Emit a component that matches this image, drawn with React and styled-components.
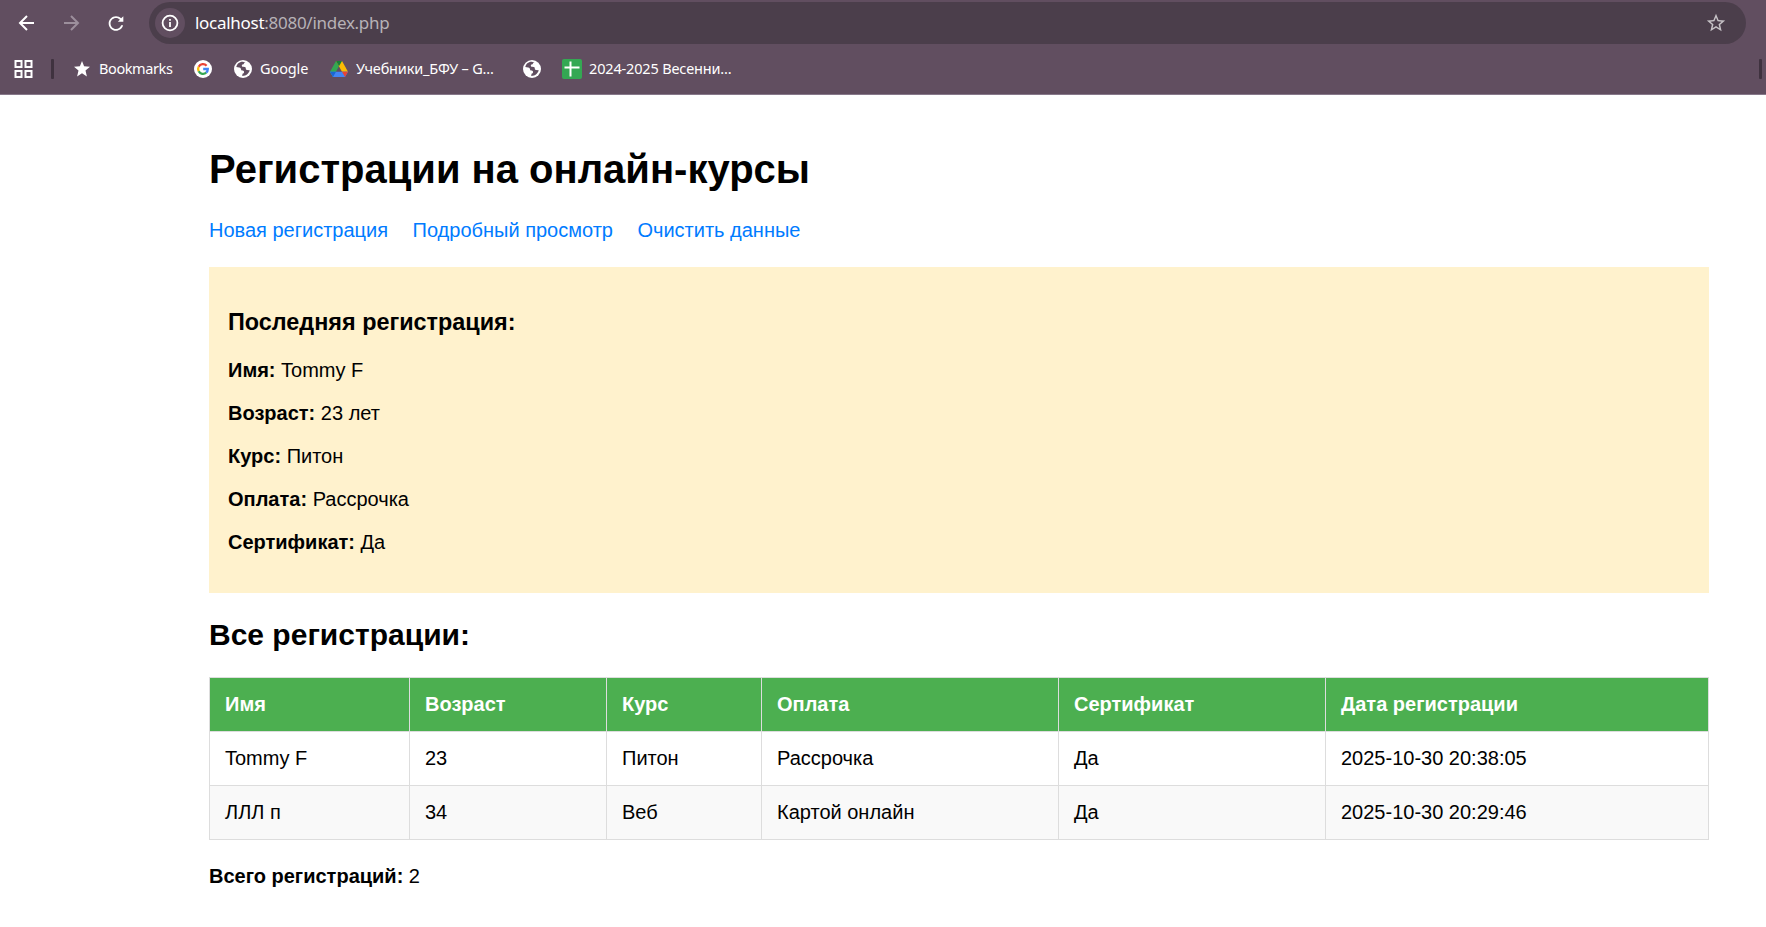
import React from "react";
import styled, { createGlobalStyle } from "styled-components";

const Global = createGlobalStyle`
  *, *::before, *::after { box-sizing: border-box; }
  html, body { margin: 0; padding: 0; background: #fff; }
  body { min-height: 927px; overflow: hidden; }
`;

const uiFont = `"Noto Sans", "Open Sans", sans-serif`;

const Chrome = styled.header`
  height: 95px;
  background: #614e60;
  border-bottom: 1px solid #87788a;
  font-family: ${uiFont};
`;

const Toolbar = styled.div`
  display: flex;
  align-items: center;
  height: 44px;
  padding: 2px 20px 0 16px;
`;

const NavButton = styled.span`
  display: flex;
  align-items: center;
  justify-content: center;
  width: 22px;
  height: 22px;
  margin-right: ${(p) => p.$gap}px;
  color: ${(p) => (p.$muted ? "#9c8f9c" : "#fff")};
`;

const AddressBar = styled.div`
  display: flex;
  align-items: center;
  flex: 1;
  height: 42px;
  padding: 0 19px 0 6px;
  border-radius: 21px;
  background: #4b3e4b;
`;

const InfoBadge = styled.span`
  display: flex;
  align-items: center;
  justify-content: center;
  width: 30px;
  height: 30px;
  margin-right: 10px;
  border-radius: 50%;
  background: #614e60;
`;

const Url = styled.span`
  flex: 1;
  font-size: 17px;
  line-height: 24px;
  letter-spacing: -0.28px;
  color: #b7b2b7;
  white-space: nowrap;
`;

const Host = styled.span`
  color: #fff;
`;

const BookmarkBar = styled.div`
  display: flex;
  align-items: center;
  height: 50px;
  padding: 0 4px 0 14px;
`;

const Divider = styled.span`
  width: 3px;
  height: 20px;
  border-radius: 1px;
  background: #3f323f;
  margin: ${(p) => p.$margin || "0"};
`;

const Bookmark = styled.span`
  display: flex;
  align-items: center;
  width: ${(p) => p.$width}px;
  gap: ${(p) => p.$gap || 8}px;
  color: #fff;
`;

const BookmarkLabel = styled.span`
  padding-bottom: 2px;
  font-size: 14.5px;
  line-height: 20px;
  letter-spacing: ${(p) => p.$track || 0}px;
  white-space: nowrap;
`;

const Page = styled.main`
  width: 1500px;
  margin: 51px 57px 0 209px;
  font: 20px/23px "Liberation Sans", Arial, sans-serif;
  color: #000;
`;

const Title = styled.h1`
  margin: 0;
  font-size: 40px;
  line-height: 46px;
`;

const Links = styled.nav`
  display: flex;
  gap: 24.5px;
  margin: 27px 0 25px;
`;

const PageLink = styled.a`
  color: #007bff;
  text-decoration: none;
`;

const LatestCard = styled.section`
  height: 326px;
  padding: 42px 19px 0;
  background: #fff2cd;
`;

const CardTitle = styled.h3`
  margin: 0 0 24px;
  font-size: 23.4px;
  line-height: 26px;
`;

const Field = styled.p`
  margin: 0 0 20px;
`;

const SectionTitle = styled.h2`
  margin: 25px 0;
  font-size: 30px;
  line-height: 34px;
`;

const Table = styled.table`
  width: 1499px;
  border-collapse: collapse;
  table-layout: fixed;
`;

const Col = styled.col`
  width: ${(p) => p.$width}px;
`;

const Row = styled.tr`
  height: 54px;
  background: ${(p) => (p.$striped ? "#f9f9f9" : "#fff")};
`;

const HeadCell = styled.th`
  padding: 0 15px;
  border: 1px solid #ddd;
  background: #4caf50;
  color: #fff;
  text-align: left;
`;

const Cell = styled.td`
  padding: 0 15px;
  border: 1px solid #ddd;
`;

const Total = styled.p`
  margin: 25px 0 0;
`;

const Back = () => (
  <svg width="22" height="22" viewBox="0 0 22 22" fill="none" stroke="currentColor" strokeWidth="2">
    <path d="M18 11H4.500M11 4l-7 7 7 7" />
  </svg>
);

const Forward = () => (
  <svg width="22" height="22" viewBox="0 0 22 22" fill="none" stroke="currentColor" strokeWidth="2">
    <path d="M3 11h13.500M10 4l7 7-7 7" />
  </svg>
);

const Reload = () => (
  <svg width="23" height="23" viewBox="0 0 24 24" fill="currentColor">
    <path d="M17.650 6.350C16.200 4.900 14.210 4 12 4c-4.420 0-7.990 3.580-7.990 8s3.570 8 7.990 8c3.730 0 6.840-2.550 7.730-6h-2.080c-.82 2.330-3.040 4-5.650 4-3.310 0-6-2.690-6-6s2.690-6 6-6c1.660 0 3.140.69 4.220 1.780L14 10h6V4l-2.350 2.350z" />
  </svg>
);

const Info = () => (
  <svg width="18" height="18" viewBox="0 0 18 18" fill="none" stroke="#fff" strokeWidth="1.8">
    <circle cx="9" cy="9" r="7.400" />
    <path d="M9 8v5M9 5v1.800" />
  </svg>
);

const StarOutline = () => (
  <svg width="22" height="22" viewBox="0 0 24 24" fill="#c6c2c6">
    <path d="M22 9.240l-7.190-.62L12 2 9.190 8.630 2 9.240l5.460 4.730L5.820 21 12 17.270 18.180 21l-1.630-7.030L22 9.240zM12 15.400l-3.760 2.270 1-4.280-3.320-2.880 4.380-.38L12 6.100l1.710 4.040 4.380.38-3.320 2.880 1 4.280L12 15.400z" />
  </svg>
);

const Grid = () => (
  <svg width="20" height="20" viewBox="0 0 20 20" fill="none" stroke="#fff" strokeWidth="2">
    <path d="M1.500 2h6v6h-6zM11.500 2h6v6h-6zM1.500 12h6v6h-6zM11.500 12h6v6h-6z" />
  </svg>
);

const Star = () => (
  <svg width="16" height="16" viewBox="0 0 16 16" fill="#fff">
    <path d="M8 0l2.100 5.300 5.900.4-4.500 3.800L12.900 15.500 8 12.300 3.100 15.500l1.400-6L0 5.700l5.900-.4z" />
  </svg>
);

const GoogleMark = () => (
  <svg width="18" height="18" viewBox="0 0 18 18">
    <circle cx="9" cy="9" r="9" fill="#fff" />
    <g fill="none" strokeWidth="2.300">
      <path d="M12.600 5.700A4.900 4.900 0 0 0 4.700 6.700" stroke="#ea4335" />
      <path d="M4.700 6.700A4.900 4.900 0 0 0 4.700 11.300" stroke="#fbbc05" />
      <path d="M4.700 11.300A4.900 4.900 0 0 0 12.200 12.700" stroke="#34a853" />
      <path d="M12.200 12.700A4.900 4.900 0 0 0 13.800 9H9.200" stroke="#4285f4" />
    </g>
  </svg>
);

const Globe = () => (
  <svg width="18" height="18" viewBox="0 0 18 18">
    <circle cx="9" cy="9" r="9" fill="#fff" />
    <path
      d="M10.500 2.100c-1.300.4-1.600 1.200-1.400 2-.9.100-1.800.5-1.800 1.500 0 .9.700 1.200 1.500 1.200h1.700c.8 0 1.200.7 1.200 1.400 0 .8.600 1.200 1.300 1.200h2.900c-.3 3-2.700 6.200-6.700 6.700v-2.300c.9-.3 1.300-.9 1.300-1.700 0-1-.7-1.600-1.700-1.600H7.300c0-1.600-.8-2.500-2.300-2.500H2.100C2.300 5 4.500 2 8.500 1.900z"
      fill="#614e60"
      transform="rotate(8 9 9)"
    />
  </svg>
);

const Drive = () => (
  <svg width="18" height="16" viewBox="0 0 18 16">
    <path d="M6 0l3 5.300L3 16 0 10.700z" fill="#34a853" />
    <path d="M6 0h6l6 10.700h-6z" fill="#fbbc04" />
    <path d="M6 0h6L9 5.300z" fill="#188038" />
    <path d="M0 10.700h18L15 16H3z" fill="#4285f4" />
    <path d="M0 10.700h6L3 16z" fill="#1967d2" />
    <path d="M12 10.700h6L15 16z" fill="#ea4335" />
  </svg>
);

const Sheet = () => (
  <svg width="20" height="20" viewBox="0 0 20 20">
    <rect width="20" height="20" rx="2" fill="#34a853" />
    <path d="M2.500 8.500h15M8.500 2.500v15" stroke="#fff" strokeWidth="2" />
  </svg>
);

const columns = [
  ["Имя", 200],
  ["Возраст", 197],
  ["Курс", 155],
  ["Оплата", 297],
  ["Сертификат", 267],
  ["Дата регистрации", 383],
];

const registrations = [
  ["Tommy F", "23", "Питон", "Рассрочка", "Да", "2025-10-30 20:38:05"],
  ["ЛЛЛ п", "34", "Веб", "Картой онлайн", "Да", "2025-10-30 20:29:46"],
];

const latest = [
  ["Имя", "Tommy F"],
  ["Возраст", "23 лет"],
  ["Курс", "Питон"],
  ["Оплата", "Рассрочка"],
  ["Сертификат", "Да"],
];

export default function App() {
  return (
    <>
      <Global />
      <Chrome>
        <Toolbar>
          <NavButton $gap={23}><Back /></NavButton>
          <NavButton $gap={22} $muted><Forward /></NavButton>
          <NavButton $gap={22}><Reload /></NavButton>
          <AddressBar>
            <InfoBadge><Info /></InfoBadge>
            <Url><Host>localhost</Host>:8080/index.php</Url>
            <StarOutline />
          </AddressBar>
        </Toolbar>
        <BookmarkBar>
          <Grid />
          <Divider $margin="0 20px 0 17px" />
          <Bookmark $width={120} $gap={9}><Star /><BookmarkLabel $track={-0.4}>Bookmarks</BookmarkLabel></Bookmark>
          <Bookmark $width={40}><GoogleMark /></Bookmark>
          <Bookmark $width={96}><Globe /><BookmarkLabel $track={-0.1}>Google</BookmarkLabel></Bookmark>
          <Bookmark $width={193}><Drive /><BookmarkLabel $track={-0.18}>Учебники_БФУ – G...</BookmarkLabel></Bookmark>
          <Bookmark $width={39}><Globe /></Bookmark>
          <Bookmark $width={180} $gap={7}><Sheet /><BookmarkLabel $track={-0.16}>2024-2025 Весенни...</BookmarkLabel></Bookmark>
          <Divider $margin="0 0 0 auto" />
        </BookmarkBar>
      </Chrome>
      <Page>
        <Title>Регистрации на онлайн-курсы</Title>
        <Links>
          <PageLink>Новая регистрация</PageLink>
          <PageLink>Подробный просмотр</PageLink>
          <PageLink>Очистить данные</PageLink>
        </Links>
        <LatestCard>
          <CardTitle>Последняя регистрация:</CardTitle>
          {latest.map(([label, value]) => (
            <Field key={label}><strong>{label}:</strong> {value}</Field>
          ))}
        </LatestCard>
        <SectionTitle>Все регистрации:</SectionTitle>
        <Table>
          <colgroup>
            {columns.map(([name, width]) => <Col key={name} $width={width} />)}
          </colgroup>
          <thead>
            <Row>{columns.map(([name]) => <HeadCell key={name}>{name}</HeadCell>)}</Row>
          </thead>
          <tbody>
            {registrations.map((cells, i) => (
              <Row key={i} $striped={i % 2 === 1}>
                {cells.map((text, j) => <Cell key={j}>{text}</Cell>)}
              </Row>
            ))}
          </tbody>
        </Table>
        <Total><strong>Всего регистраций:</strong> 2</Total>
      </Page>
    </>
  );
}
